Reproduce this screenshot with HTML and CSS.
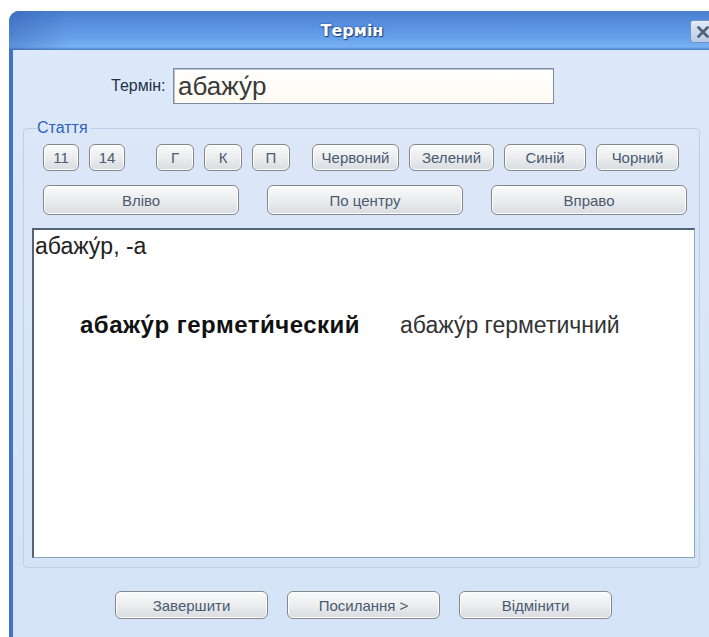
FILE: index.html
```html
<!DOCTYPE html>
<html lang="uk">
<head>
<meta charset="utf-8">
<title>Термін</title>
<link rel="stylesheet" href="styles.css">
</head>
<body>
<div class="window">
  <div class="titlebar">
    <div class="title">Термін</div>
    <div class="close" aria-label="Закрити">
      <svg width="16" height="16" viewBox="0 0 16 16"><path d="M3.5 3.5 L12.5 12.5 M12.5 3.5 L3.5 12.5" stroke="#51627a" stroke-width="2.8" stroke-linecap="round"/></svg>
    </div>
  </div>
  <div class="client">
    <div class="term-row">
      <span class="term-label">Термін:</span>
      <div class="term-input">абажу́р</div>
    </div>
    <fieldset class="group">
      <legend>Стаття</legend>
      <div class="row-format">
        <button class="btn btn-size">11</button>
        <button class="btn btn-size">14</button>
        <button class="btn btn-style gap-wide">Г</button>
        <button class="btn btn-style">К</button>
        <button class="btn btn-style">П</button>
        <button class="btn btn-color gap-mid w87">Червоний</button>
        <button class="btn btn-color w85">Зелений</button>
        <button class="btn btn-color w82">Синій</button>
        <button class="btn btn-color w83">Чорний</button>
      </div>
      <div class="row-align">
        <button class="btn btn-wide">Вліво</button>
        <button class="btn btn-wide">По центру</button>
        <button class="btn btn-wide">Вправо</button>
      </div>
      <div class="editor">
        <p class="line-head">абажу́р, -а</p>
        <p class="line-pair"><b class="src">абажу́р гермети́ческий</b><span class="dst">абажу́р герметичний</span></p>
      </div>
    </fieldset>
    <div class="actions">
      <button class="btn btn-action">Завершити</button>
      <button class="btn btn-action">Посилання &gt;</button>
      <button class="btn btn-action">Відмінити</button>
    </div>
  </div>
</div>
</body>
</html>
```
FILE: styles.css
```css
html, body {
  margin: 0;
  padding: 0;
  background: #ffffff;
  overflow: hidden;
  height: 637px;
}

.window {
  margin: 11px 0 0 9px;
  width: 712px;
  border-radius: 10px 10px 0 0;
  overflow: hidden;
  background: #3f74c6;
}

/* caption */
.titlebar {
  height: 39px;
  display: flex;
  align-items: center;
  background:
    linear-gradient(to right, rgba(40, 80, 160, 0.35) 0, rgba(40, 80, 160, 0) 60px),
    linear-gradient(to bottom, #4a7fd0 0%, #5890df 35%, #67a2ec 70%, #78b2f3 92%, #4b7dcc 100%);
}
.title {
  flex: 1;
  padding-left: 5px;
  text-align: center;
  font-family: "DejaVu Sans", sans-serif;
  font-weight: bold;
  font-size: 16px;
  color: #ffffff;
  text-shadow: 0 0 2px #1d3f7a, 1px 1px 1px #1d3f7a;
}
.close {
  width: 26px;
  height: 23px;
  margin: 2px 5px 0 0;
  box-sizing: border-box;
  border: 1px solid #7393c0;
  border-radius: 3px;
  background: linear-gradient(to bottom, #e2ebf7, #b7cbe6);
  display: flex;
  align-items: center;
  justify-content: center;
}

/* client area */
.client {
  margin-left: 4px;
  height: 600px;
  background: linear-gradient(to bottom, #dde8f8, #d4e3f7);
  padding-top: 18px;
  box-sizing: border-box;
  font-family: "Liberation Sans", Arial, sans-serif;
}

.term-row {
  display: flex;
  align-items: center;
  padding-left: 98px;
  height: 36px;
}
.term-label {
  width: 60px;
  font-size: 16px;
  color: #243247;
}
.term-input {
  width: 381px;
  height: 36px;
  margin-left: 2px;
  box-sizing: border-box;
  border: 1px solid #7d8ba3;
  box-shadow: inset 1px 1px 0 #b8c2d2;
  background: linear-gradient(to bottom, #ffffff, #fffbf2);
  font-size: 26px;
  color: #3a3a3a;
  padding: 2px 0 0 4px;
  line-height: 30px;
}

/* article group */
.group {
  margin: 16px 0 0 10px;
  width: 677px;
  box-sizing: border-box;
  padding: 0 0 9px 0;
  border: 1px solid #bfd0e6;
  border-radius: 4px;
}
.group legend {
  margin-left: 13px;
  padding: 0 2px 0 0;
  font-size: 16px;
  line-height: 16px;
  color: #2f62b8;
}

.btn {
  box-sizing: border-box;
  font-family: "Liberation Sans", Arial, sans-serif;
  font-size: 15px;
  color: #4a5a70;
  border: 1px solid #84878c;
  border-radius: 6px;
  background: linear-gradient(to bottom, #fafafa 0%, #ebedef 50%, #d9dce0 100%);
  box-shadow: inset 0 0 0 1px #ffffff;
  padding: 0;
  cursor: default;
}

.row-format {
  display: flex;
  gap: 10px;
  margin: 8px 0 0 19px;
}
.row-format .btn { height: 27px; }
.btn-size { width: 36px; }
.btn-style { width: 38px; }
.gap-wide { margin-left: 21px; }
.gap-mid { margin-left: 12px; }
.w87 { width: 87px; }
.w85 { width: 85px; }
.w82 { width: 82px; }
.w83 { width: 83px; }

.row-align {
  display: grid;
  grid-template-columns: repeat(3, 196px);
  column-gap: 28px;
  margin: 14px 0 0 19px;
}
.btn-wide { height: 30px; }

.editor {
  margin: 13px 0 0 8px;
  width: 663px;
  height: 330px;
  box-sizing: border-box;
  background: #ffffff;
  border-style: solid;
  border-width: 2px 1px 1px 2px;
  border-color: #55637a #8ea3c2 #8ea3c2 #55637a;
  font-family: "Liberation Sans", Arial, sans-serif;
  color: #222222;
}
.editor p { margin: 0; }
.line-head {
  font-size: 23px;
  line-height: 26px;
  padding: 3px 0 0 1px;
}
.line-pair {
  font-size: 23px;
  line-height: 26px;
  padding: 53px 0 0 46px;
  display: flex;
  gap: 40px;
}
.src { font-weight: bold; color: #111111; font-size: 24px; letter-spacing: 0.5px; }
.dst { color: #333333; }

.actions {
  display: flex;
  gap: 19px;
  margin: 23px 0 0 102px;
}
.btn-action {
  width: 153px;
  height: 28px;
}
```
